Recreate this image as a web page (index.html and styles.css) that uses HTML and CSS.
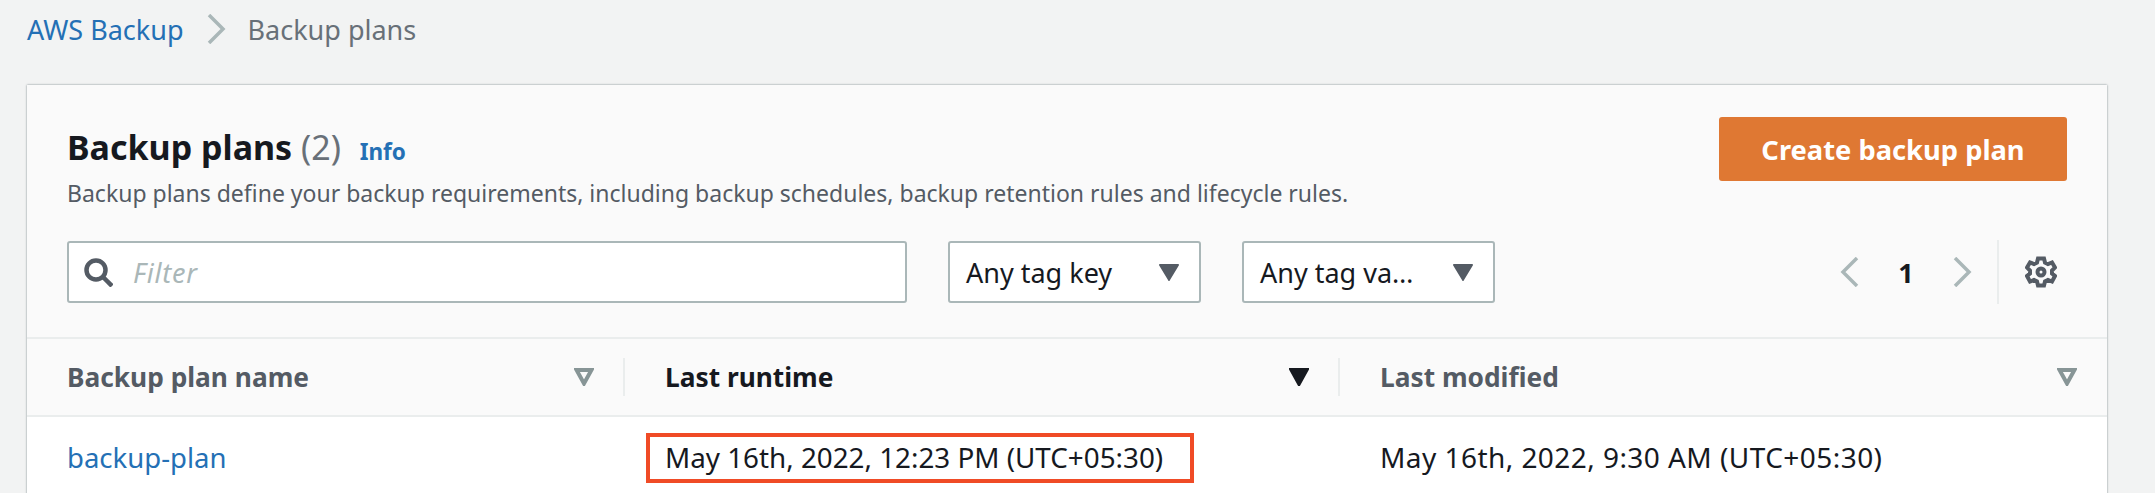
FILE: index.html
```html
<!DOCTYPE html>
<html lang="en">
<head>
    <meta charset="UTF-8">
    <meta name="viewport" content="width=device-width, initial-scale=1.0">
    <title>Backup plans</title>
    <link rel="stylesheet" href="styles.css">
</head>
<body>
    <nav class="crumbs">
        <a href="#">AWS Backup</a>
        <svg class="crumb-sep" viewBox="0 0 20 30"><path d="M3 1l14 14L3 29"/></svg>
        <span>Backup plans</span>
    </nav>
    <section class="card">
        <div class="card-top">
            <div class="head">
                <div>
                    <h1>Backup plans <span class="count">(2)</span> <a class="info" href="#">Info</a></h1>
                    <p class="desc">Backup plans define your backup requirements, including backup schedules, backup retention rules and lifecycle rules.</p>
                </div>
                <button class="create">Create backup plan</button>
            </div>
            <div class="filters">
                <div class="field search">
                    <svg class="search-icon" viewBox="0 0 29 29"><circle cx="12" cy="12" r="9.500"/><path d="M19 19l9 9"/></svg>
                    <span class="placeholder">Filter</span>
                </div>
                <div class="field select">
                    <span>Any tag key</span>
                    <svg class="caret" viewBox="0 0 20 18"><path d="M1 1h18a1 1 0 0 1 .8 1.500L11 17a1 1 0 0 1-2 0L.2 2.500A1 1 0 0 1 1 1z"/></svg>
                </div>
                <div class="field select">
                    <span>Any tag va…</span>
                    <svg class="caret" viewBox="0 0 20 18"><path d="M1 1h18a1 1 0 0 1 .8 1.500L11 17a1 1 0 0 1-2 0L.2 2.500A1 1 0 0 1 1 1z"/></svg>
                </div>
                <div class="pager">
                    <svg class="chev" viewBox="0 0 20 30"><path d="M17 1L3 15l14 14"/></svg>
                    <span class="page-no">1</span>
                    <svg class="chev" viewBox="0 0 20 30"><path d="M3 1l14 14L3 29"/></svg>
                </div>
                <div class="prefs">
                    <svg class="gear" viewBox="0 0 32 32">
                        <path d="M13 2.500h6l1 4 3 1.500 4-1.500 3 5-3 3v3l3 2.500-3 5.500-4-1.500-3 1.500-1 4h-6l-1-4-3-1.500-4 1.500-3-5.500 3-2.500v-3l-3-3 3-5 4 1.500 3-1.500z"/>
                        <circle cx="16" cy="16" r="3.500"/>
                    </svg>
                </div>
            </div>
        </div>
        <div class="table-head">
            <div class="th"><span>Backup plan name</span><svg class="sort" viewBox="0 0 20 18"><path d="M2.500 2h15L10 15.500z"/></svg></div>
            <div class="th active"><span>Last runtime</span><svg class="sort" viewBox="0 0 20 18"><path d="M2.500 2h15L10 15.500z"/></svg></div>
            <div class="th last"><span>Last modified</span><svg class="sort" viewBox="0 0 20 18"><path d="M2.500 2h15L10 15.500z"/></svg></div>
        </div>
        <div class="table-row">
            <div class="td name"><a href="#">backup-plan</a></div>
            <div class="td boxed"><span class="mark">May 16th, 2022, 12:23 PM (UTC+05:30)</span></div>
            <div class="td modified">May 16th, 2022, 9:30 AM (UTC+05:30)</div>
        </div>
    </section>
</body>
</html>
```

FILE: styles.css
```css
html, body {
    height: 493px;
    overflow: hidden;
}
body {
    margin: 0;
    background-color: #f2f3f3;
    color: #16191f;
    font-family: "Noto Sans", sans-serif;
    font-size: 27px;
}
a {
    color: #2470b5;
    text-decoration: none;
}
.crumbs {
    display: flex;
    align-items: center;
    gap: 22px;
    height: 58px;
    padding-left: 27px;
    color: #687078;
    font-size: 27px;
}
.crumb-sep {
    width: 20px;
    height: 30px;
}
.crumb-sep path, .chev path {
    fill: none;
    stroke: #aab7b8;
    stroke-width: 3.5;
}
.card {
    margin: 27px 48px 0 27px;
    height: 420px;
    background-color: #ffffff;
    box-shadow: 0 0 2px rgba(0,28,36,0.5);
}
.card-top {
    background-color: #fafafa;
    padding: 32px 40px 0 40px;
    height: 220px;
    border-bottom: 2px solid #eaeded;
}
.head {
    display: flex;
    justify-content: space-between;
}
h1 {
    margin: 0;
    padding-top: 5px;
    font-size: 34px;
    font-weight: 700;
    line-height: 51px;
}
.count {
    font-weight: 400;
    color: #687078;
}
.info {
    font-size: 22.5px;
    font-weight: 700;
    margin-left: 10px;
}
.desc {
    margin: 0;
    color: #545b64;
    font-size: 23px;
    line-height: 32px;
}
.create {
    width: 348px;
    height: 64px;
    border: 0;
    border-radius: 3px;
    background-color: #df7833;
    color: #ffffff;
    font-family: inherit;
    font-size: 27.3px;
    font-weight: 700;
}
.filters {
    display: flex;
    align-items: center;
    margin-top: 31px;
    height: 64px;
}
.field {
    box-sizing: border-box;
    display: flex;
    align-items: center;
    height: 62px;
    background-color: #ffffff;
    border: 2px solid #aab7b8;
    border-radius: 3px;
}
.search {
    width: 840px;
    margin-right: 41px;
    padding-left: 15px;
}
.search-icon {
    width: 29px;
    height: 29px;
    margin-right: 20px;
}
.search-icon circle, .search-icon path {
    fill: none;
    stroke: #545b64;
    stroke-width: 4.5;
}
.placeholder {
    color: #aab7b8;
    font-style: italic;
    letter-spacing: 0.8px;
}
.select {
    width: 253px;
    margin-right: 41px;
    padding: 0 20px 0 16px;
    justify-content: space-between;
}
.caret {
    width: 20px;
    height: 18px;
    fill: #545b64;
}
.pager {
    display: flex;
    align-items: center;
    margin-left: 304px;
}
.chev {
    width: 20px;
    height: 30px;
}
.page-no {
    width: 92px;
    text-align: center;
    font-weight: 700;
}
.prefs {
    display: flex;
    align-items: center;
    height: 64px;
    margin-left: 25px;
    padding-left: 26px;
    border-left: 2px solid #eaeded;
}
.gear {
    width: 32px;
    height: 32px;
    fill: none;
    stroke: #545b64;
    stroke-width: 4;
}
.table-head {
    display: grid;
    grid-template-columns: 598px 715px 1fr;
    align-items: center;
    height: 76px;
    background-color: #fafafa;
    border-bottom: 2px solid #eaeded;
}
.th {
    box-sizing: border-box;
    display: flex;
    align-items: center;
    justify-content: space-between;
    height: 38px;
    padding: 0 29px 0 40px;
    border-right: 2px solid #eaeded;
    color: #545b64;
    font-size: 26.3px;
    font-weight: 700;
}
.th.last {
    border-right: 0;
    padding-right: 30px;
}
.th.active {
    color: #16191f;
}
.sort {
    width: 20px;
    height: 18px;
    fill: none;
    stroke: #879596;
    stroke-width: 4;
}
.th.active .sort {
    fill: #16191f;
    stroke: #16191f;
}
.table-row {
    display: grid;
    grid-template-columns: 598px 715px 1fr;
    align-items: center;
    height: 82px;
    background-color: #ffffff;
}
.td {
    padding-left: 40px;
}
.td.name {
    padding-bottom: 2px;
    font-size: 27.5px;
}
.td.modified {
    padding-bottom: 2px;
    font-size: 28px;
    letter-spacing: 0.45px;
}
.td.boxed {
    padding-left: 21px;
    font-size: 27.8px;
}
.mark {
    display: inline-block;
    box-sizing: border-box;
    width: 548px;
    height: 50px;
    line-height: 40px;
    padding-left: 15px;
    border: 4px solid #f04b26;
}
```
